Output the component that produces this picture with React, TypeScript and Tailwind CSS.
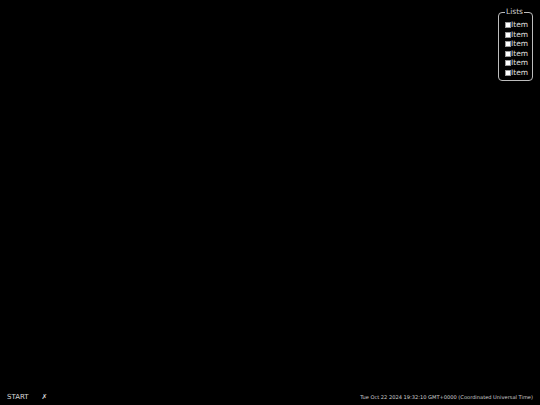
import React from "react";

const items = ["Item", "Item", "Item", "Item", "Item", "Item"];

export default function App() {
  return (
    <div
      className="w-[540px] h-[405px] bg-black flex flex-col text-white overflow-hidden"
      style={{ fontFamily: '"DejaVu Sans", sans-serif' }}
    >
      <div className="flex-1 flex justify-end pt-[8px] pr-[7px]">
        <fieldset className="border border-[#bdbdbd] rounded-[4px] w-[35px] h-[73px] pl-[6px] pt-[1px] m-0">
          <legend className="text-[7.5px] leading-[8px] text-[#d0d0d0] px-[1px]">Lists</legend>
          <div className="flex flex-col gap-[1.5px] mt-[4px]">
            {items.map((t, i) => (
              <div key={i} className="flex items-center h-[8px] text-[7.5px] leading-[8px] text-[#e0e0e0]">
                <span className="inline-block w-[6px] h-[6px] bg-white border border-[#999]" />
                <span>{t}</span>
              </div>
            ))}
          </div>
        </fieldset>
      </div>
      <div className="h-[16px] flex items-center justify-between px-[7px] pt-[1px]">
        <div className="flex items-center text-[7px] text-[#d8d8d8]">
          <span>START</span>
          <span className="ml-[13px] text-[7px]">✗</span>
        </div>
        <span className="text-[5.1px] text-[#d0d0d0]">
          Tue Oct 22 2024 19:32:10 GMT+0000 (Coordinated Universal Time)
        </span>
      </div>
    </div>
  );
}
